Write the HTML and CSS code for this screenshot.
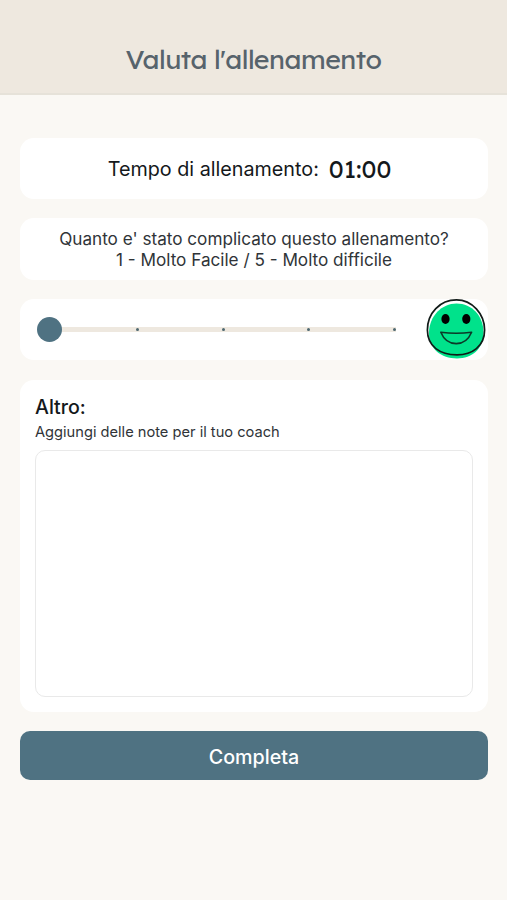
FILE: index.html
```html
<!DOCTYPE html>
<html lang="it">
<head>
<meta charset="utf-8">
<meta name="viewport" content="width=device-width, initial-scale=1">
<title>Valuta l'allenamento</title>
<link rel="stylesheet" href="styles.css">
</head>
<body>
<header class="header"><h1 class="title">Valuta l'allenamento</h1></header>
<main class="main">
  <section class="card time"><span class="time-label">Tempo di allenamento:</span><span class="time-value">01:00</span></section>
  <section class="card question"><span class="q1">Quanto e' stato complicato questo allenamento?</span><span class="q2">1 - Molto Facile / 5 - Molto difficile</span></section>
  <section class="card rating">
    <div class="slider">
      <div class="track"></div>
      <div class="steps"><span class="thumb"></span><i class="tick"></i><i class="tick"></i><i class="tick"></i><i class="tick"></i></div>
    </div>
    <svg class="face" viewBox="0 0 60 60" width="60" height="60" aria-hidden="true">
      <path fill="#00e28b" d="M30.500 4.600C46 4.600 57.500 17 57.500 33.500C57.500 50 46 59.400 31 59.400C15 59.400 3 50 3 34C3 17 16 4.600 30.500 4.600Z"/>
      <path fill="none" stroke="#111b18" stroke-width="1.700" d="M30.500 .9C46 .9 58.600 15 58.600 31C58.600 47.500 46 55.800 31 55.800C14 55.800 1.400 47.500 1.400 31C1.400 14 14 .9 30.500 .9Z"/>
      <ellipse cx="19.500" cy="20" rx="4.100" ry="5"/>
      <ellipse cx="40.300" cy="20" rx="4.100" ry="5"/>
      <path fill="none" stroke="#0b3a28" stroke-width="1.600" stroke-linejoin="round" d="M14.800 33.200Q30 35.400 45.600 33.200C42.500 40.500 37 44.600 30.300 44.600C23.500 44.600 17.800 40.500 14.800 33.200Z"/>
    </svg>
  </section>
  <section class="card notes">
    <h2 class="notes-title">Altro:</h2>
    <label class="notes-label" for="note">Aggiungi delle note per il tuo coach</label>
    <textarea class="field" id="note"></textarea>
  </section>
  <button class="submit" type="button">Completa</button>
</main>
</body>
</html>
```
FILE: styles.css
```css
* { box-sizing: border-box; }
body { margin: 0; min-height: 900px; background: #faf8f4; font-family: Inter, "Liberation Sans", sans-serif; color: #14181b; }
.header { height: 95px; padding-top: 42px; background: #eee8df; border-bottom: 2px solid #e6e2d9; text-align: center; }
.title { margin: 0; font: 400 26.800px/34px Lexend, Lato, sans-serif; letter-spacing: -.5px; color: #57636c; }
.main { display: flex; flex-direction: column; gap: 19px; padding: 43px 19px 0 20px; }
.card { background: #fff; border-radius: 14px; }
.time { height: 61px; display: flex; align-items: center; justify-content: center; gap: 10px; padding-top: 1px; padding-right: 9px; }
.time-label { font-size: 19.750px; }
.time-value { padding-bottom: 1px; font: 400 24.500px/30px Lexend, Lato, sans-serif; }
.question { height: 62px; padding-top: 1px; display: flex; flex-direction: column; align-items: center; justify-content: center; font-size: 17.150px; line-height: 20.500px; color: #303438; }
.rating { height: 61px; display: flex; align-items: center; padding-left: 17px; padding-right: 2px; justify-content: space-between; }
.slider { width: 359px; display: grid; align-items: center; }
.track, .steps { grid-area: 1 / 1; }
.track { height: 5px; margin-left: 13px; background: #eee8df; }
.steps { display: flex; align-items: center; justify-content: space-between; }
.thumb { width: 25px; height: 25px; margin-right: -8.600px; border-radius: 50%; background: #4f7282; }
.tick { width: 3px; height: 3px; border-radius: 50%; background: #4f6870; }
.face { flex: none; margin-top: -1px; }
.notes { height: 332px; margin-top: 1px; padding: 15px; display: flex; flex-direction: column; }
.notes-title { margin: 0; font-size: 19.600px; line-height: 24px; font-weight: 500; }
.notes-label { margin-top: 4px; font-size: 14.650px; line-height: 18px; color: #303438; }
.field { margin-top: 9px; flex: 1; width: 438px; border: 1px solid #e9e9e9; border-radius: 10px; background: #fff; resize: none; outline: 0; }
.submit { height: 49px; margin: 0; padding: 2px 0 0; border: 0; border-radius: 10px; background: #4f7282; color: #fff; font: 500 19.700px Inter, sans-serif; }
```
